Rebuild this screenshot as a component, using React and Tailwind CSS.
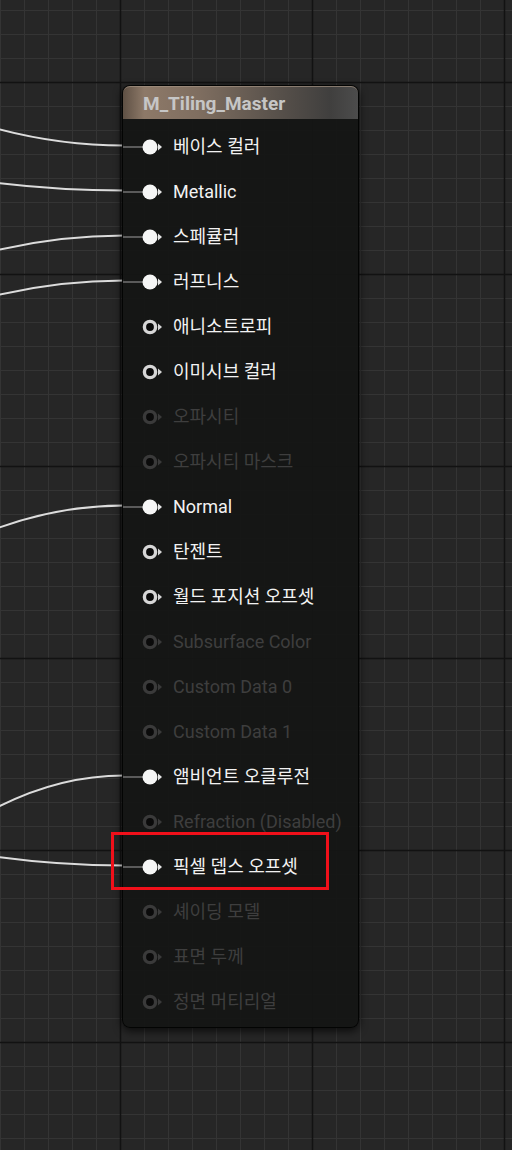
import React from 'react';

const W = 512;
const H = 1150;

const pins = [
  { label: '베이스 컬러', kind: 'on', from: 129 },
  { label: 'Metallic', kind: 'on', from: 183 },
  { label: '스페큘러', kind: 'on', from: 250 },
  { label: '러프니스', kind: 'on', from: 295 },
  { label: '애니소트로피', kind: 'open' },
  { label: '이미시브 컬러', kind: 'open' },
  { label: '오파시티', kind: 'off' },
  { label: '오파시티 마스크', kind: 'off' },
  { label: 'Normal', kind: 'on', from: 528 },
  { label: '탄젠트', kind: 'open' },
  { label: '월드 포지션 오프셋', kind: 'open' },
  { label: 'Subsurface Color', kind: 'off' },
  { label: 'Custom Data 0', kind: 'off' },
  { label: 'Custom Data 1', kind: 'off' },
  { label: '앰비언트 오클루전', kind: 'on', from: 807 },
  { label: 'Refraction (Disabled)', kind: 'off' },
  { label: '픽셀 뎁스 오프셋', kind: 'on', from: 857 },
  { label: '셰이딩 모델', kind: 'off' },
  { label: '표면 두께', kind: 'off' },
  { label: '정면 머티리얼', kind: 'off' },
];

const rowY = (i) => 145.5 + i * 45;

const Grid = () => {
  const vx = [];
  for (let x = 0; x <= W; x += 24) vx.push(x);
  const hy = [];
  for (let y = 10; y <= H; y += 24) hy.push(y);
  return (
    <svg className="absolute inset-0" width={W} height={H}>
      {vx.map((x) => (
        <line key={'v' + x} x1={x + 0.5} y1={0} x2={x + 0.5} y2={H} stroke="#343434" strokeWidth="1" />
      ))}
      {hy.map((y) => (
        <line key={'h' + y} x1={0} y1={y + 0.5} x2={W} y2={y + 0.5} stroke="#343434" strokeWidth="1" />
      ))}
      {[120, 312, 504].map((x) => (
        <line key={'V' + x} x1={x + 0.5} y1={0} x2={x + 0.5} y2={H} stroke="#121212" strokeWidth="1.5" />
      ))}
      {[82, 274, 466, 658, 850, 1042].map((y) => (
        <line key={'H' + y} x1={0} y1={y + 0.5} x2={W} y2={y + 0.5} stroke="#121212" strokeWidth="1.5" />
      ))}
      {pins.map((p, i) =>
        p.from ? (
          <path
            key={'w' + i}
            d={`M -2 ${p.from} Q 60 ${rowY(i)} 124 ${rowY(i)}`}
            fill="none"
            stroke="#dcdcdc"
            strokeWidth="2"
          />
        ) : null
      )}
    </svg>
  );
};

const Pin = ({ kind }) => {
  if (kind === 'on') {
    return (
      <svg width="21" height="18" viewBox="0 0 21 18">
        <circle cx="8" cy="9" r="7.5" fill="#f6f6f6" />
        <polygon points="16,5.5 20,9 16,12.5" fill="#e8e8e8" />
      </svg>
    );
  }
  const c = kind === 'open' ? '#d6d6d6' : '#3a3a3a';
  return (
    <svg width="21" height="18" viewBox="0 0 21 18">
      <circle cx="8" cy="9" r="5.6" fill="#0a0a0a" stroke={c} strokeWidth="3.4" />
      <polygon points="16,5.5 20,9 16,12.5" fill={c} />
    </svg>
  );
};

const Row = ({ label, kind }) => (
  <div className="flex items-center h-[45px]">
    <div className="w-[21px] flex items-center">
      {kind === 'on' && <div className="w-full h-[2px] bg-[#5a5a5a]" />}
    </div>
    <div className="-ml-[2px] flex items-center">
      <Pin kind={kind} />
    </div>
    <span
      className={
        'ml-[10px] text-[18px] leading-none whitespace-nowrap ' +
        (kind === 'off' ? 'text-[#3e3e3e]' : 'text-[#f2f2f2]')
      }
    >
      {label}
    </span>
  </div>
);

export default function App() {
  return (
    <div
      className="relative w-[512px] h-[1150px] overflow-hidden bg-[#262626]"
      style={{ fontFamily: 'Roboto, "Noto Sans CJK KR", sans-serif' }}
    >
      <Grid />

      <div className="absolute left-[122px] top-[85px] w-[237px] rounded-[8px] border border-black/80 bg-[rgba(20,21,20,0.93)] shadow-[0_3px_8px_rgba(0,0,0,0.7)]">
        <div className="h-[33px] rounded-t-[7px] border-t border-[#a39282]/70 bg-[linear-gradient(90deg,#5e5044_0%,#8d7968_9%,#7f6e60_32%,#5c544d_62%,#403f3e_88%,#4c4c4c_100%)] flex items-center pl-[20px]">
          <span className="text-[19px] font-bold text-[#c6c6c6] leading-none">M_Tiling_Master</span>
        </div>
        <div className="pt-[5px] pb-[3px]">
          {pins.map((p) => (
            <Row key={p.label} label={p.label} kind={p.kind} />
          ))}
        </div>
      </div>

      <div className="absolute left-[111px] top-[832px] w-[218px] h-[58px] border-[3px] border-[#f0101a]" />
    </div>
  );
}
